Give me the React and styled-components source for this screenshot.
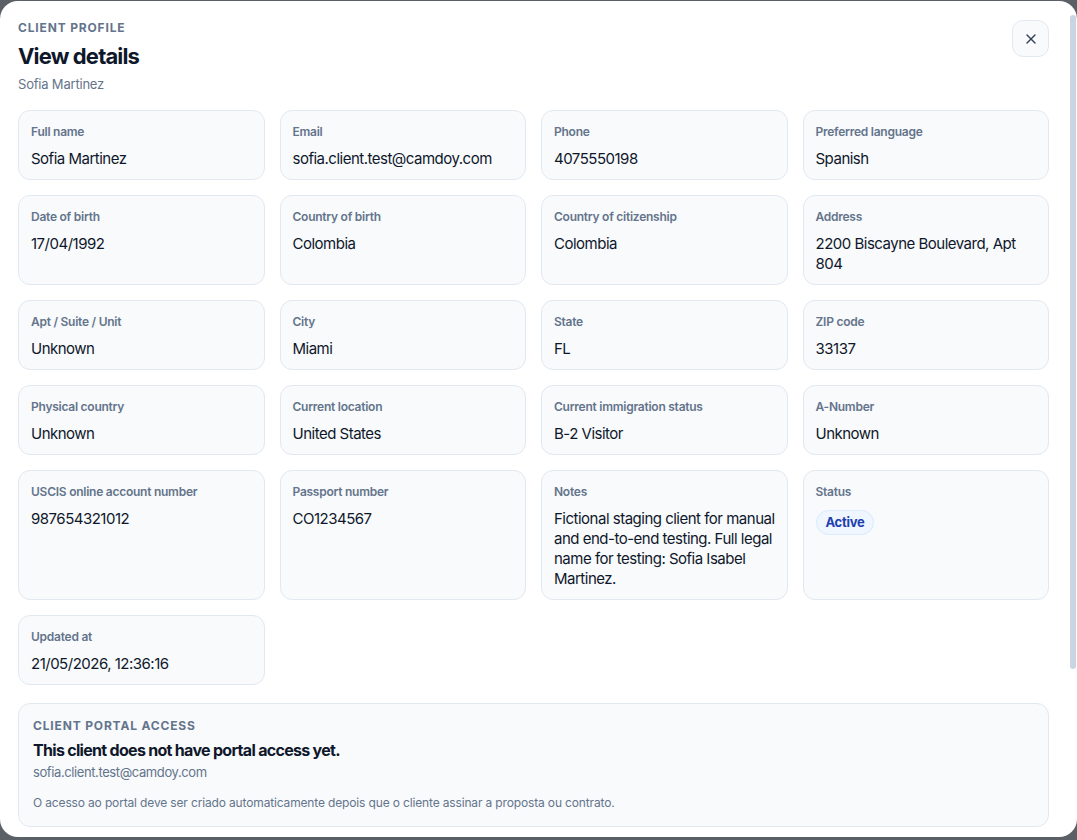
import styled, { createGlobalStyle } from "styled-components";
import { X } from "lucide-react";

const GlobalStyle = createGlobalStyle`
  * { box-sizing: border-box; }
  html, body {
    margin: 0;
    height: 100%;
    background: #5b5f66;
    font-family: Inter, "Noto Sans", "Liberation Sans", sans-serif;
    -webkit-font-smoothing: antialiased;
  }
  #root { height: 100%; }
`;

const Backdrop = styled.div`
  height: 840px;
  padding: 1px 0 3px;
  display: flex;
`;

const Modal = styled.div`
  position: relative;
  flex: 1;
  background: #ffffff;
  border-radius: 18px;
  overflow: hidden;
  padding: 19px 0 0 18px;
`;

const ScrollThumb = styled.div`
  position: absolute;
  top: 14px;
  right: 1px;
  width: 6px;
  height: 654px;
  border-radius: 3px;
  background: #cbd5e1;
`;

const Content = styled.div`
  width: 1031px;
`;

const Header = styled.header`
  display: flex;
  justify-content: space-between;
  align-items: flex-start;
`;

const Eyebrow = styled.div`
  font-size: 12px;
  line-height: 16px;
  font-weight: 700;
  letter-spacing: 0.07em;
  text-transform: uppercase;
  color: #64748b;
`;

const Title = styled.h1`
  margin: 6px 0 0;
  font-size: 22px;
  line-height: 28px;
  font-weight: 700;
  letter-spacing: -0.85px;
  color: #0f172a;
`;

const Subtitle = styled.div`
  margin-top: 5px;
  font-size: 13px;
  line-height: 18px;
  letter-spacing: -0.2px;
  color: #64748b;
`;

const CloseButton = styled.button`
  width: 37px;
  height: 37px;
  display: flex;
  align-items: center;
  justify-content: center;
  border: 1px solid #e2e8f0;
  border-radius: 11px;
  background: #f8fafc;
  color: #334155;
  cursor: pointer;
  padding: 0;
`;

const Grid = styled.div`
  margin-top: 17px;
  display: grid;
  grid-template-columns: repeat(4, 1fr);
  gap: 15px;
`;

const Field = styled.div`
  display: flex;
  flex-direction: column;
  gap: 9px;
  padding: 13px 6px 10px 12px;
  border: 1px solid #e2e8f0;
  border-radius: 12px;
  background: #f8fafc;
`;

const Label = styled.div`
  font-size: 12px;
  line-height: 16px;
  font-weight: 600;
  letter-spacing: -0.25px;
  color: #64748b;
`;

const Value = styled.div`
  font-size: 15px;
  line-height: 20px;
  color: #0f172a;
  letter-spacing: -0.5px;
`;

const Badge = styled.span`
  align-self: flex-start;
  margin-top: 1px;
  padding: 3px 9px;
  font-size: 13px;
  line-height: 17px;
  font-weight: 700;
  letter-spacing: -0.3px;
  color: #1e40af;
  background: #eff6ff;
  border: 1px solid #dbeafe;
  border-radius: 999px;
`;

const Section = styled.section`
  margin-top: 18px;
  padding: 14px 14px 15px;
  border: 1px solid #e2e8f0;
  border-radius: 12px;
  background: #f8fafc;
`;

const SectionTitle = styled.div`
  margin-top: 5px;
  font-size: 16px;
  line-height: 22px;
  font-weight: 700;
  letter-spacing: -0.7px;
  color: #0f172a;
`;

const Muted = styled.div`
  margin-top: ${(p) => p.$gap || 2}px;
  font-size: ${(p) => p.$size || 13}px;
  line-height: ${(p) => (p.$size === 12 ? 16 : 18)}px;
  letter-spacing: ${(p) => (p.$size === 12 ? -0.15 : -0.4)}px;
  color: #64748b;
`;

const fields = [
  ["Full name", "Sofia Martinez"],
  ["Email", "sofia.client.test@camdoy.com"],
  ["Phone", "4075550198"],
  ["Preferred language", "Spanish"],
  ["Date of birth", "17/04/1992"],
  ["Country of birth", "Colombia"],
  ["Country of citizenship", "Colombia"],
  ["Address", "2200 Biscayne Boulevard, Apt 804"],
  ["Apt / Suite / Unit", "Unknown"],
  ["City", "Miami"],
  ["State", "FL"],
  ["ZIP code", "33137"],
  ["Physical country", "Unknown"],
  ["Current location", "United States"],
  ["Current immigration status", "B-2 Visitor"],
  ["A-Number", "Unknown"],
  ["USCIS online account number", "987654321012"],
  ["Passport number", "CO1234567"],
  [
    "Notes",
    "Fictional staging client for manual and end-to-end testing. Full legal name for testing: Sofia Isabel Martinez.",
  ],
  ["Status", null],
  ["Updated at", "21/05/2026, 12:36:16"],
];

export default function App() {
  return (
    <>
      <GlobalStyle />
      <Backdrop>
        <Modal>
          <Content>
            <Header>
              <div>
                <Eyebrow>Client profile</Eyebrow>
                <Title>View details</Title>
                <Subtitle>Sofia Martinez</Subtitle>
              </div>
              <CloseButton aria-label="Close">
                <X size={16} strokeWidth={2} />
              </CloseButton>
            </Header>

            <Grid>
              {fields.map(([label, value]) => (
                <Field key={label}>
                  <Label>{label}</Label>
                  {value === null ? <Badge>Active</Badge> : <Value>{value}</Value>}
                </Field>
              ))}
            </Grid>

            <Section>
              <Eyebrow>Client portal access</Eyebrow>
              <SectionTitle>This client does not have portal access yet.</SectionTitle>
              <Muted>sofia.client.test@camdoy.com</Muted>
              <Muted $size={12} $gap={14}>
                O acesso ao portal deve ser criado automaticamente depois que o
                cliente assinar a proposta ou contrato.
              </Muted>
            </Section>
          </Content>
          <ScrollThumb />
        </Modal>
      </Backdrop>
    </>
  );
}
